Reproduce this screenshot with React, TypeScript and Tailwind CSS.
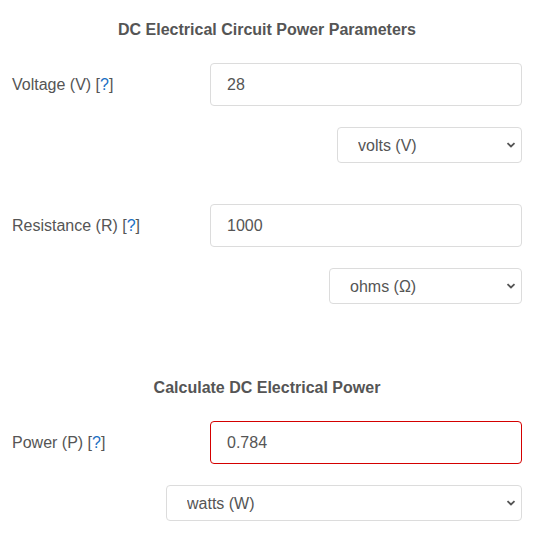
import { useState } from 'react';

function Chevron() {
  return (
    <svg
      className="pointer-events-none absolute right-[6px] top-1/2 -translate-y-1/2"
      width="10"
      height="6"
      viewBox="0 0 10 6"
      fill="none"
    >
      <path d="M1.5 1.2 L5 4.5 L8.5 1.2" stroke="#555" strokeWidth="1.8" />
    </svg>
  );
}

function Label({ text }: { text: string }) {
  return (
    <label className="w-[198px] shrink-0 text-[16px] text-[#555]">
      {text} [<a className="text-[#1a6fc4]">?</a>]
    </label>
  );
}

function UnitSelect({ value, options, width }: { value: string; options: string[]; width: string }) {
  const [v, setV] = useState(value);
  return (
    <div className={`relative ${width}`}>
      <select
        value={v}
        onChange={(e) => setV(e.target.value)}
        className="h-[36px] w-full appearance-none rounded-[4px] border border-[#dcdcdc] bg-white pb-[1px] pl-[20px] pt-[2px] text-[16px] text-[#555] focus:outline-none"
      >
        {options.map((o) => (
          <option key={o}>{o}</option>
        ))}
      </select>
      <Chevron />
    </div>
  );
}

export default function App() {
  return (
    <div className="px-[12px] pr-[13px] pt-[19px] font-['Liberation_Sans',Arial,sans-serif] text-[#555]">
      <h2 className="text-center text-[16px] font-bold leading-[22px]">DC Electrical Circuit Power Parameters</h2>

      <div className="mt-[22px] flex items-center">
        <Label text="Voltage (V)" />
        <input
          defaultValue="28"
          className="h-[43px] flex-1 rounded-[4px] border border-[#dcdcdc] px-[16px] text-[16px] text-[#555] focus:outline-none"
        />
      </div>
      <div className="mt-[21px] flex justify-end">
        <UnitSelect value="volts (V)" options={['millivolts (mV)', 'volts (V)', 'kilovolts (kV)']} width="w-[185px]" />
      </div>

      <div className="mt-[41px] flex items-center">
        <Label text="Resistance (R)" />
        <input
          defaultValue="1000"
          className="h-[43px] flex-1 rounded-[4px] border border-[#dcdcdc] px-[16px] text-[16px] text-[#555] focus:outline-none"
        />
      </div>
      <div className="mt-[21px] flex justify-end">
        <UnitSelect value="ohms (Ω)" options={['milliohms (mΩ)', 'ohms (Ω)', 'kilohms (kΩ)', 'megohms (MΩ)']} width="w-[193px]" />
      </div>

      <h2 className="mt-[73px] text-center text-[16px] font-bold leading-[22px]">Calculate DC Electrical Power</h2>

      <div className="mt-[22px] flex items-center">
        <Label text="Power (P)" />
        <input
          readOnly
          value="0.784"
          className="h-[43px] flex-1 rounded-[4px] border border-[#d40000] px-[16px] text-[16px] text-[#555] focus:outline-none"
        />
      </div>
      <div className="mt-[21px] flex justify-end">
        <UnitSelect value="watts (W)" options={['milliwatts (mW)', 'watts (W)', 'kilowatts (kW)']} width="w-[356px]" />
      </div>
    </div>
  );
}
